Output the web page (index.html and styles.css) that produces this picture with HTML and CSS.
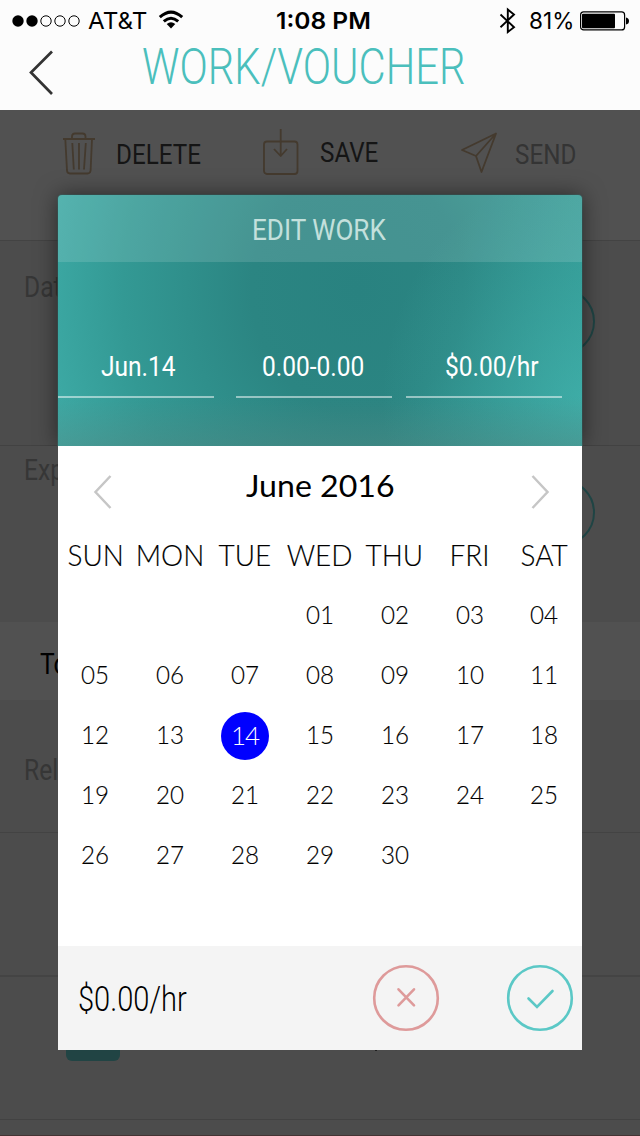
FILE: index.html
```html
<!DOCTYPE html>
<html lang="en">
<head>
<meta charset="utf-8">
<title>Work/Voucher</title>
<link rel="stylesheet" href="styles.css">
</head>
<body>
<div class="screen">
  <header class="top">
    <div class="status">
      <svg class="signal" width="70" height="14" viewBox="0 0 70 14"><circle cx="6" cy="7" r="5.7"/><circle cx="20" cy="7" r="5.7"/><g fill="none" stroke="#000" stroke-width="1"><circle cx="34" cy="7" r="5.2"/><circle cx="48" cy="7" r="5.2"/><circle cx="62" cy="7" r="5.2"/></g></svg>
      <span class="fit carrier">AT&amp;T</span>
      <svg class="wifi" width="26" height="20" viewBox="0 0 26 20"><g fill="none" stroke="#000" stroke-width="3"><path d="M1.8 7.2Q13 -3 24.2 7.2"/><path d="M5.8 11.4Q13 5 20.2 11.4"/></g><path d="M8.7 14.1Q13 10.4 17.3 14.1L13 18.4Z"/></svg>
      <span class="fit clock">1:08 PM</span>
      <svg class="bluetooth" width="18" height="28" viewBox="0 0 18 28"><path d="M1.500 7.500L15 20.200L8.800 25V2.500L15 7.500L1.500 20.200" fill="none" stroke="#000" stroke-width="1.900"/></svg>
      <span class="fit percent">81%</span>
      <svg class="battery" width="50" height="20" viewBox="0 0 50 20"><rect x=".6" y=".9" width="44" height="18" rx="3" fill="none" stroke="#000" stroke-width="1.2"/><rect x="2" y="2.7" width="33" height="14.5" rx="1"/><path d="M46 6.500q3 .5 3 3.500t-3 3.500z"/></svg>
    </div>
    <div class="nav">
      <svg class="back" width="28" height="46" viewBox="0 0 28 46"><path d="M25 1.500L4 22.500L25 44" fill="none" stroke="#333" stroke-width="2.700"/></svg>
      <h1 class="fit title">WORK/VOUCHER</h1>
    </div>
  </header>
  <main class="page">
    <div class="toolbar">
      <div class="tool delete">
        <svg width="34" height="44" viewBox="0 0 34 44" class="ico"><path d="M1 7H33M10 7V4.500Q10 1.500 13 1.500H20.500Q23.500 1.500 23.500 4.500V7M3.300 7L5 38.500Q5.200 41.500 8 41.500H25.500Q28.300 41.500 28.600 38.500L30 7M10.300 11L11.800 37.500M17 11V37.500M23.800 11L22 37.500"/></svg>
        <span class="fit">DELETE</span>
      </div>
      <div class="tool save">
        <svg width="38" height="48" viewBox="0 0 38 48" class="ico"><rect x="2" y="13.500" width="33.500" height="32.500" rx="3"/><path d="M18.700 1V28M12 21L18.700 28L25 21"/></svg>
        <span class="fit">SAVE</span>
      </div>
      <div class="tool send">
        <svg width="38" height="42" viewBox="0 0 38 42" class="ico"><path d="M36 1.500L2 18L16 24L21.500 40ZM36 1.500L16 24"/></svg>
        <span class="fit">SEND</span>
      </div>
    </div>
    <section class="row date"><span class="fit">Dat</span><i class="ring"></i></section>
    <section class="row expense"><span class="fit">Exp</span><i class="ring"></i></section>
    <section class="row total"><span class="fit">To</span></section>
    <section class="row related"><span class="fit">Rel</span></section>
    <section class="row blank"></section>
    <section class="row entry"><i class="tile"></i><i class="mark"></i></section>
    <section class="row last"></section>
  </main>
  <div class="modal">
    <div class="hero">
      <div class="caption"><h2 class="fit">EDIT WORK</h2></div>
      <div class="fields">
        <div class="field day"><span class="fit">Jun.14</span></div>
        <div class="field hours"><span class="fit">0.00-0.00</span></div>
        <div class="field rate"><span class="fit">$0.00/hr</span></div>
      </div>
    </div>
    <div class="calendar">
      <div class="month">
        <svg width="20" height="36" viewBox="0 0 20 36"><path d="M17.500 2L2.500 18L17.500 34"/></svg>
        <h3 class="fit">June 2016</h3>
        <svg width="20" height="36" viewBox="0 0 20 36"><path d="M2.500 2L17.500 18L2.500 34"/></svg>
      </div>
      <div class="grid names"><span>SUN</span><span>MON</span><span>TUE</span><span>WED</span><span>THU</span><span>FRI</span><span>SAT</span></div>
      <div class="grid days">
        <span></span><span></span><span></span><span>01</span><span>02</span><span>03</span><span>04</span>
        <span>05</span><span>06</span><span>07</span><span>08</span><span>09</span><span>10</span><span>11</span>
        <span>12</span><span>13</span><span class="picked">14</span><span>15</span><span>16</span><span>17</span><span>18</span>
        <span>19</span><span>20</span><span>21</span><span>22</span><span>23</span><span>24</span><span>25</span>
        <span>26</span><span>27</span><span>28</span><span>29</span><span>30</span><span></span><span></span>
      </div>
    </div>
    <footer class="actions">
      <span class="fit price">$0.00/hr</span>
      <svg width="68" height="68" viewBox="0 0 68 68" stroke="#de9a9a"><circle cx="34" cy="34" r="31.800"/><path d="M26.500 25.300L42 41.300M42 25.300L26.500 41.300"/></svg>
      <svg class="ok" width="68" height="68" viewBox="0 0 68 68" stroke="#5bc8c6"><circle cx="34" cy="34" r="31.800"/><path d="M22.500 34.500L31 43L46.500 27"/></svg>
    </footer>
  </div>
</div>
</body>
</html>
```
FILE: styles.css
```css
* { box-sizing: border-box; }
body { margin: 0; }
h1, h2, h3 { margin: 0; font-weight: 400; }
.screen { position: relative; width: 640px; height: 1136px; overflow: hidden; background: #4c4c4c; font-family: Roboto, "Liberation Sans", sans-serif; color: #000; }
.fit { display: block; flex: none; white-space: nowrap; transform-origin: 0 50%; }

.top { height: 110px; background: #fcfcfc; }
.status { display: flex; align-items: center; height: 41px; padding-left: 12px; font-family: Inter, "Liberation Sans", sans-serif; font-size: 23.500px; line-height: 41px; }
.status svg { flex: none; }
.carrier { width: 70px; margin-left: 6px; transform: scaleX(1.03); }
.wifi { margin-top: -2px; }
.clock { width: 221px; margin-left: 92px; font-weight: 600; transform: scaleX(1.045); }
.bluetooth { margin-left: 2px; }
.percent { width: 50px; margin-left: 12px; transform: scaleX(.96); }
.battery { margin-left: 1px; }
.nav { display: flex; align-items: flex-start; height: 69px; padding-left: 27px; }
.back { flex: none; margin-top: 9px; }
.title { margin: -9px 0 0 86.500px; font-size: 49.500px; font-weight: 300; line-height: 70px; color: #4bbfbc; transform: scaleX(.844); }

.page { display: flex; flex-direction: column; }
.toolbar { display: flex; height: 131px; background: #515151; border-bottom: 1px solid #434343; font-size: 28.500px; line-height: 40px; color: #151515; }
.tool { display: flex; align-items: flex-start; flex: none; }
.tool .fit { transform: scaleX(.85); }
.ico { flex: none; fill: none; stroke: #443a2e; stroke-width: 1.800; stroke-linejoin: round; }
.delete { width: 199px; padding: 22px 0 0 62px; }
.delete .fit { margin: 3px 0 0 20px; }
.save { width: 200px; padding: 18px 0 0 63px; }
.save .fit { margin: 5px 0 0 20px; }
.send { padding: 22px 0 0 61px; color: #343434; }
.send .fit { margin: 3px 0 0 17px; }
.row { display: flex; font-size: 29px; line-height: 40px; color: #363636; padding-left: 24px; }
.row .fit { transform: scaleX(.85); }
.date { height: 205px; padding-top: 26px; border-bottom: 1px solid #424242; }
.expense { height: 176px; padding-top: 4px; }
.ring { position: absolute; left: 528px; top: 288px; width: 67px; height: 67px; border: 2px solid #1f4444; border-radius: 50%; }
.expense .ring { top: 479px; }
.total { height: 78px; padding: 22px 0 0 40px; background: #515151; color: #000; }
.related { height: 133px; padding-top: 50px; border-bottom: 1px solid #434343; }
.blank { height: 144px; border-bottom: 2px solid #444; }
.entry { height: 143px; padding-left: 66px; border-bottom: 1px solid #424242; }
.tile { width: 54px; height: 84px; border-radius: 6px; background: #214444; }
.mark { width: 2px; height: 74px; margin-left: 255px; background: #202020; }
.last { height: 16px; border-bottom: 1px solid #433; }

.modal { position: absolute; left: 58px; top: 195px; width: 524px; height: 855px; background: linear-gradient(transparent 8px, #fff 8px); }
.hero { height: 251px; border-radius: 4px 4px 0 0; color: #fff; clip-path: inset(-30px -30px 0 -30px);
  background:
    linear-gradient(to top, rgba(85,130,125,.4), rgba(85,130,125,0) 50px),
    radial-gradient(ellipse 200px 230px at 100% 82%, rgba(72,190,184,.5), rgba(65,180,175,0)),
    radial-gradient(ellipse 380px 440px at 300px 95px, #298280 0%, #2b8582 28%, #339994 62%, #44b6b1 100%);
  box-shadow: 0 0 22px rgba(0,0,0,.5), 0 0 0 1px rgba(66,109,107,.6); }
.caption { display: flex; height: 67px; padding: 15px 0 0 194px; background: rgba(255,255,255,.13); border-radius: 4px 4px 0 0; }
.caption .fit { font-size: 30px; line-height: 40px; color: #c3e0dc; transform: scaleX(.87); }
.fields { display: flex; padding-top: 90px; font-size: 28.500px; line-height: 30px; }
.field { width: 156px; height: 46px; border-bottom: 2px solid rgba(255,255,255,.5); }
.field .fit { transform: scaleX(.86); }
.day { padding-left: 43px; }
.hours { margin-left: 22px; padding-left: 26px; }
.rate { margin-left: 14px; padding-left: 39px; }

.calendar { height: 500px; font-family: Lato, "Liberation Sans", sans-serif; }
.month { display: flex; justify-content: space-between; height: 79px; padding: 28px 32px 0 35px; }
.month svg { fill: none; stroke: #c6c6c6; stroke-width: 2.500; }
.month .fit { margin-top: -9px; width: 152px; font-size: 31px; line-height: 40px; transform: scaleX(1.035); }
.grid { display: grid; grid-template-columns: repeat(7, 1fr); justify-items: center; font-weight: 300; color: #000; -webkit-text-stroke: .15px currentColor; }
.names { height: 60px; font-size: 28.500px; line-height: 61px; }
.names span { transform: scaleX(.98); }
.days { grid-auto-rows: 60px; font-size: 26px; line-height: 59px; }
.days span { transform: scaleX(.93); }
.days .picked { width: 48px; height: 48px; margin-top: 7px; border-radius: 50%; background: #00f; color: #fff; line-height: 47px; text-align: center; -webkit-text-stroke: 0; transform: none; letter-spacing: -1px; }

.actions { display: flex; height: 104px; padding: 18px 0 0 20px; background: #f4f4f4; }
.actions svg { flex: none; fill: none; stroke-width: 2.600; stroke-linecap: round; }
.actions .ok { margin-left: 66px; }
.price { width: 294px; font-size: 35px; font-weight: 300; line-height: 72px; transform: scaleX(.83); }
```
